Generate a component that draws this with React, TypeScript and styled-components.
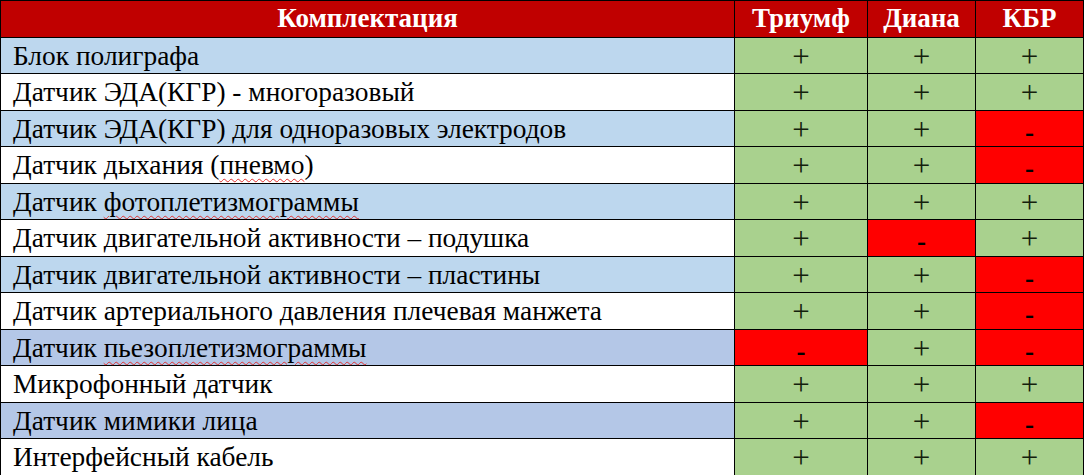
import styled, { createGlobalStyle } from "styled-components";

type Mark = "+" | "-";
type Item = { name: React.ReactNode; tone: "light" | "white" | "blue"; marks: Mark[] };

const GlobalStyle = createGlobalStyle`
  html, body {
    margin: 0;
    padding: 0;
    background: #ffffff;
  }
`;

const Squiggle = styled.span`
  text-decoration: underline wavy #e0312f;
  text-decoration-thickness: 1px;
  text-underline-offset: 4px;
`;

const items: Item[] = [
  { name: "Блок полиграфа", tone: "light", marks: ["+", "+", "+"] },
  { name: "Датчик ЭДА(КГР) - многоразовый", tone: "white", marks: ["+", "+", "+"] },
  { name: "Датчик ЭДА(КГР) для одноразовых электродов", tone: "light", marks: ["+", "+", "-"] },
  { name: <>Датчик дыхания (<Squiggle>пневмо</Squiggle>)</>, tone: "white", marks: ["+", "+", "-"] },
  { name: <>Датчик <Squiggle>фотоплетизмограммы</Squiggle></>, tone: "light", marks: ["+", "+", "+"] },
  { name: "Датчик двигательной активности – подушка", tone: "white", marks: ["+", "-", "+"] },
  { name: "Датчик двигательной активности – пластины", tone: "light", marks: ["+", "+", "-"] },
  { name: "Датчик артериального давления плечевая манжета", tone: "white", marks: ["+", "+", "-"] },
  { name: <>Датчик <Squiggle>пьезоплетизмограммы</Squiggle></>, tone: "blue", marks: ["-", "+", "-"] },
  { name: "Микрофонный датчик", tone: "white", marks: ["+", "+", "+"] },
  { name: "Датчик мимики лица", tone: "blue", marks: ["+", "+", "-"] },
  { name: "Интерфейсный кабель", tone: "white", marks: ["+", "+", "+"] },
];

const toneColors = {
  light: "#bdd7ee",
  white: "#ffffff",
  blue: "#b4c7e7",
};

export default function App() {
  return (
    <>
      <GlobalStyle />
      <Table>
        <colgroup>
          <col style={{ width: 734 }} />
          <col style={{ width: 133 }} />
          <col style={{ width: 108 }} />
          <col style={{ width: 108 }} />
        </colgroup>
        <thead>
          <tr>
            <HeadCell>Комплектация</HeadCell>
            <HeadCell>Триумф</HeadCell>
            <HeadCell>Диана</HeadCell>
            <HeadCell>КБР</HeadCell>
          </tr>
        </thead>
        <tbody>
          {items.map((item, i) => (
            <tr key={i}>
              <NameCell $tone={item.tone}>{item.name}</NameCell>
              {item.marks.map((m, j) => (
                <MarkCell key={j} $ok={m === "+"}>
                  {m === "+" ? <Plus>+</Plus> : <Minus>-</Minus>}
                </MarkCell>
              ))}
            </tr>
          ))}
        </tbody>
      </Table>
    </>
  );
}

const Table = styled.table`
  width: 1084px;
  height: 475px;
  border-collapse: collapse;
  table-layout: fixed;
  font-family: "Liberation Serif", "Times New Roman", serif;
  font-size: 27px;
  color: #000000;

  tr {
    height: 36.5px;
  }
`;

const HeadCell = styled.th`
  background-color: #c00000;
  color: #ffffff;
  font-weight: 700;
  font-size: 27px;
  text-align: center;
  border: 1.5px solid #000000;
  padding: 0;
  line-height: 1;
`;

const NameCell = styled.td<{ $tone: keyof typeof toneColors }>`
  background-color: ${({ $tone }) => toneColors[$tone]};
  border: 1.5px solid #000000;
  padding: 2px 0 0 12px;
  font-size: 27.4px;
  white-space: nowrap;
  line-height: 1;
`;

const MarkCell = styled.td<{ $ok: boolean }>`
  background-color: ${({ $ok }) => ($ok ? "#a9d18e" : "#ff0000")};
  border: 1.5px solid #000000;
  text-align: center;
  padding: 0;
  line-height: 1;
`;

const Plus = styled.span`
  display: inline-block;
  font-size: 31px;
  color: #14200c;
  transform: translateY(1px);
`;

const Minus = styled.span`
  display: inline-block;
  font-weight: 700;
  font-size: 27px;
  transform: translateY(4px);
`;
